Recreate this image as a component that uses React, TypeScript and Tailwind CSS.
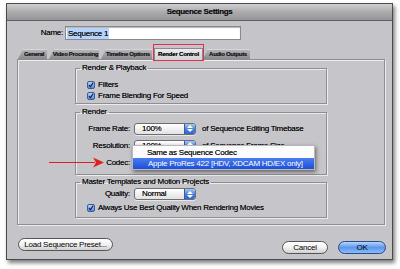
import React from "react";

const F = "font-['Liberation_Sans',Arial,sans-serif]";

function Check() {
  return (
    <div className="w-[8px] h-[8px] rounded-[2px] border border-[#3a5a9a] bg-gradient-to-b from-[#b9d3f7] to-[#4f86db] flex items-center justify-center shrink-0">
      <svg width="8" height="8" viewBox="0 0 8 8">
        <path d="M1.3 4.2 L3.2 6.3 L6.9 0.8" fill="none" stroke="#0c1a33" strokeWidth="1.4" />
      </svg>
    </div>
  );
}

function Popup({ value }: { value: string }) {
  return (
    <div className="flex w-[62px] h-[12px] rounded-[3px] border border-[#6e6e72] bg-gradient-to-b from-white to-[#e2e2e2] shadow-[0_1px_0_#e8e8e8] overflow-hidden">
      <div className="flex-1 pl-[7px] leading-[10px]">{value}</div>
      <div className="w-[11px] bg-gradient-to-b from-[#a8c8f4] via-[#4a82dc] to-[#2c66cf] border-l border-[#3a5a9a] flex flex-col items-center justify-center gap-[1px]">
        <svg width="6" height="3" viewBox="0 0 6 3"><path d="M0 3 L3 0 L6 3Z" fill="#fff" /></svg>
        <svg width="6" height="3" viewBox="0 0 6 3"><path d="M0 0 L3 3 L6 0Z" fill="#fff" /></svg>
      </div>
    </div>
  );
}

function Tab({ label, w, active }: { label: string; w: string; active?: boolean }) {
  if (active) {
    return (
      <div className={`${w} h-[15px] -mb-[1px] flex items-end outline-[1.5px] outline outline-[#e0304e] relative z-10`}>
        <div className="w-full h-[12px] bg-gradient-to-b from-[#ececee] to-[#d2d2d6] border-t border-x border-[#8a8a8e] flex items-center justify-center text-[6px] font-bold tracking-[-0.2px] text-black">
          {label}
        </div>
      </div>
    );
  }
  return (
    <div className={`${w} h-[10px] bg-gradient-to-b from-[#b4b4b8] to-[#8a8a8e] [clip-path:polygon(5px_0,100%_0,100%_100%,0_100%)] flex items-center justify-center pl-[3px] text-[6px] font-bold tracking-[-0.3px] text-[#1c1c1c] border-t border-[#d6d6d8]`}>
      {label}
    </div>
  );
}

function Row({ label, children }: { label: string; children: React.ReactNode }) {
  return (
    <div className="flex items-center h-[17px]">
      <div className="w-[54px] text-right">{label}</div>
      <div className="ml-[4px]">{children}</div>
    </div>
  );
}

const groupCls =
  "w-[252px] mx-auto border border-[#8e8e92] shadow-[inset_1px_1px_0_#ececee,1px_1px_0_#ececee] px-0";
const legendCls = "ml-[4px] px-[2px] leading-[10px] text-[8px]";

export default function App() {
  return (
    <div className={`w-[400px] h-[269px] bg-white pt-[3px] pl-[6px] ${F} text-[8px] tracking-[-0.25px] text-black [text-shadow:0_0_0.35px_rgba(0,0,0,0.6)]`}>
      <div className="w-[387px] h-[257px] bg-[#c5c5c9] border border-[#4a4a4c] shadow-[2px_3px_4px_rgba(0,0,0,0.5)] flex flex-col">
        {/* title bar */}
        <div className="h-[17px] bg-gradient-to-b from-[#cfcfd1] via-[#ababad] to-[#959597] border-b border-[#5e5e60] flex items-center justify-center text-[8px] font-bold tracking-[-0.35px] text-[#111]">
          Sequence Settings
        </div>

        {/* name row */}
        <div className="mt-[5px] flex items-center h-[14px]">
          <div className="w-[56px] text-right">Name:</div>
          <div className="ml-[2px] w-[176px] h-[14px] bg-white border border-[#8a8a8e] shadow-[inset_0_1px_1px_rgba(0,0,0,0.3)] flex items-center pl-[1px]">
            <span className="bg-[#b5d3fb] leading-[11px] px-[1px]">Sequence 1</span>
          </div>
        </div>

        {/* tabs */}
        <div className="mt-[7px] ml-[11px] flex items-end gap-[2px] h-[12px]">
          <Tab label="General" w="w-[29px]" />
          <Tab label="Video Processing" w="w-[50px]" />
          <Tab label="Timeline Options" w="w-[51px]" />
          <Tab label="Render Control" w="w-[49px]" active />
          <div className="-ml-[2px]">
            <Tab label="Audio Outputs" w="w-[47px]" />
          </div>
        </div>

        {/* panel */}
        <div className="ml-[10px] w-[368px] h-[166px] bg-[#c6c6ca] border border-[#8e8e92] shadow-[inset_1px_1px_0_#ececee,1px_1px_0_#ececee] flex flex-col pt-[3px]">
          <fieldset className={groupCls}>
            <legend className={legendCls}>Render &amp; Playback</legend>
            <div className="pt-[6px] pb-[2px] pl-[11px]">
              <div className="flex items-center h-[11px] gap-[3px]">
                <Check />
                <span>Filters</span>
              </div>
              <div className="flex items-center h-[11px] gap-[3px]">
                <Check />
                <span>Frame Blending For Speed</span>
              </div>
            </div>
          </fieldset>

          <fieldset className={`${groupCls} mt-[3px]`}>
            <legend className={legendCls}>Render</legend>
            <div className="pt-[3px] pb-[3px]">
              <Row label="Frame Rate:">
                <div className="flex items-center gap-[6px]">
                  <Popup value="100%" />
                  <span>of Sequence Editing Timebase</span>
                </div>
              </Row>
              <Row label="Resolution:">
                <div className="flex items-center gap-[6px]">
                  <Popup value="100%" />
                  <span>of Sequence Frame Size</span>
                </div>
              </Row>
              <div className="relative">
                <Row label="Codec:">
                  <Popup value="" />
                </Row>
                {/* red arrow */}
                <svg className="absolute left-[-27px] top-[3px]" width="56" height="11" viewBox="0 0 56 11">
                  <line x1="0" y1="5.5" x2="46" y2="5.5" stroke="#e02020" strokeWidth="1.2" />
                  <path d="M44 0.5 L55 5.5 L44 10.5 L47 5.5Z" fill="#e02020" />
                </svg>
                {/* popup menu */}
                <div className="absolute left-[56px] top-[-9px] w-[183px] h-[25px] bg-white/95 shadow-[1px_2px_4px_rgba(0,0,0,0.5)] border border-[#b8b8bc] pt-[1px] z-20">
                  <div className="h-[11px] leading-[11px] pl-[14px]">Same as Sequence Codec</div>
                  <div className="h-[11px] leading-[11px] pl-[15px] bg-gradient-to-b from-[#4a7cf0] to-[#1d4fd6] text-white [text-shadow:none]">
                    Apple ProRes 422 [HDV, XDCAM HD/EX only]
                  </div>
                </div>
              </div>
            </div>
          </fieldset>

          <fieldset className={`${groupCls} mt-[2px]`}>
            <legend className={legendCls}>Master Templates and Motion Projects</legend>
            <div className="pb-[2px]">
              <div className="flex items-center h-[14px]">
                <div className="w-[54px] text-right">Quality:</div>
                <div className="ml-[4px]">
                  <Popup value="Normal" />
                </div>
              </div>
              <div className="flex items-center h-[14px] gap-[3px] pl-[11px]">
                <Check />
                <span>Always Use Best Quality When Rendering Movies</span>
              </div>
            </div>
          </fieldset>
        </div>

        {/* buttons */}
        <div className="flex items-start mt-[13px] ml-[11px] mr-[6px]">
          <button className="w-[95px] h-[13px] rounded-full border border-[#555] bg-gradient-to-b from-white via-[#f2f2f2] to-[#d0d0d0] text-[8px] leading-[11px] tracking-[-0.25px]">
            Load Sequence Preset...
          </button>
          <div className="flex-1" />
          <button className="mt-[3px] w-[46px] h-[13px] rounded-full border border-[#555] bg-gradient-to-b from-white via-[#f2f2f2] to-[#d0d0d0] text-[8px] leading-[11px] tracking-[-0.25px]">
            Cancel
          </button>
          <button className="mt-[3px] ml-[10px] w-[48px] h-[13px] rounded-full border border-[#2a4a8a] bg-gradient-to-b from-[#b8d4fa] via-[#5b97ec] to-[#8cbcf6] text-[8px] leading-[11px] tracking-[-0.25px]">
            OK
          </button>
        </div>
      </div>
    </div>
  );
}
